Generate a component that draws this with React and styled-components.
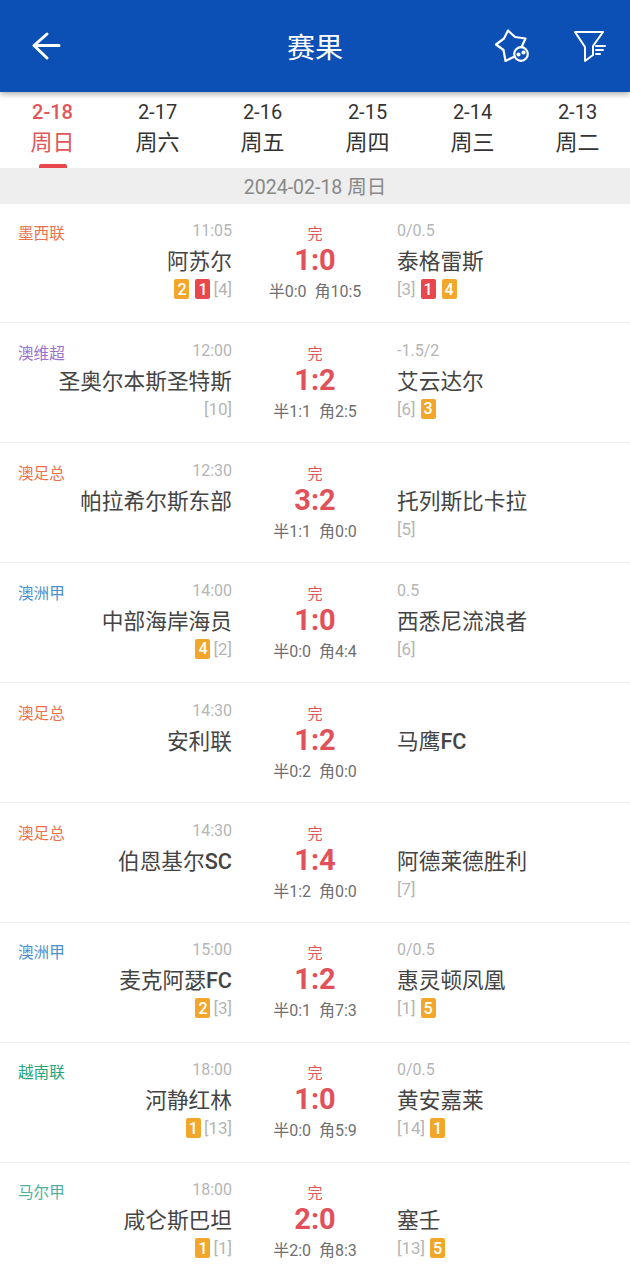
import React from "react";
import styled, { createGlobalStyle } from "styled-components";

const GlobalStyle = createGlobalStyle`
  * {
    box-sizing: border-box;
  }
  html, body {
    margin: 0;
    padding: 0;
    background: #fff;
    font-family: Roboto, "Noto Sans CJK SC", sans-serif;
  }
`;

const Page = styled.div`
  width: 630px;
  height: 1280px;
  overflow: hidden;
`;

const Header = styled.header`
  position: relative;
  z-index: 1;
  height: 92px;
  display: flex;
  align-items: center;
  justify-content: space-between;
  padding: 0 22px 0 30px;
  background: #0d50b5;
  box-shadow: 0 2px 6px rgba(0, 0, 0, 0.35);
`;

const Title = styled.h1`
  position: absolute;
  left: 0;
  right: 0;
  top: 30px;
  margin: 0;
  font-size: 28px;
  line-height: 38px;
  font-weight: 400;
  text-align: center;
  color: #fff;
`;

const Actions = styled.div`
  display: flex;
  align-items: center;
  gap: 42px;
`;

const Icon = styled.svg`
  display: block;
  fill: none;
  stroke: #fff;
  stroke-width: ${(p) => p.$weight || 2};
  stroke-linecap: round;
  stroke-linejoin: round;
`;

const Tabs = styled.nav`
  height: 76px;
  display: grid;
  grid-template-columns: repeat(6, 105px);
`;

const Tab = styled.div`
  position: relative;
  display: flex;
  flex-direction: column;
  align-items: center;
  padding-top: 8px;
  color: ${(p) => (p.$active ? "#e2555a" : "#333")};
`;

const TabDate = styled.span`
  font-size: 20px;
  line-height: 24px;
  font-weight: ${(p) => (p.$active ? 500 : 400)};
`;

const TabDay = styled.span`
  margin-top: 1px;
  font-size: 22px;
  line-height: 36px;
`;

const TabMark = styled.i`
  position: absolute;
  bottom: 0;
  width: 28px;
  height: 4px;
  border-radius: 2px 2px 0 0;
  background: #e8474c;
`;

const DateBar = styled.div`
  height: 35.5px;
  padding-top: 5px;
  background: #eee;
  color: #888;
  font-size: 19.5px;
  line-height: 30px;
  text-align: center;
`;

const Row = styled.div`
  height: 119.9px;
  display: grid;
  grid-template-columns: 233px 164px 1fr;
  border-bottom: 1px solid #eee;
`;

const Home = styled.div`
  display: flex;
  flex-direction: column;
  padding: 17.6px 1px 0 18px;
`;

const TopLine = styled.div`
  height: 20px;
  display: flex;
  justify-content: space-between;
  align-items: flex-start;
`;

const League = styled.span`
  font-size: 15.6px;
  line-height: 26px;
  color: ${(p) => p.$color};
`;

const Time = styled.span`
  font-size: 16px;
  line-height: 20px;
  color: #b5b5b5;
`;

const Team = styled.div`
  margin-top: 3px;
  font-size: 21.7px;
  line-height: 36px;
  color: #444;
  text-align: ${(p) => (p.$away ? "left" : "right")};
`;

const Latin = styled.span`
  font-weight: 500;
`;

const Rank = styled.span`
  font-size: 17px;
  color: #b5b5b5;
`;

const Marks = styled.div`
  height: 22px;
  margin-top: -2px;
  display: flex;
  align-items: center;
  gap: 6px;
  justify-content: ${(p) => (p.$away ? "flex-start" : "flex-end")};

  ${Rank} {
    margin: ${(p) => (p.$away ? "0 -1px 0 0" : "0 0 0 -3px")};
  }
`;

const Card = styled.span`
  width: 15px;
  height: 20px;
  border-radius: 2px;
  display: flex;
  align-items: center;
  justify-content: center;
  font-size: 16px;
  font-weight: 500;
  color: #fff;
  background: ${(p) => (p.$red ? "#e8474c" : "#f2a72a")};
`;

const Middle = styled.div`
  display: flex;
  flex-direction: column;
  align-items: center;
  padding-top: 20.6px;
`;

const Status = styled.span`
  font-size: 15px;
  line-height: 20px;
  color: #e2555a;
`;

const Score = styled.span`
  font-size: 29px;
  line-height: 32px;
  font-weight: 700;
  color: #e2505a;
`;

const Extra = styled.span`
  margin-top: 4px;
  font-size: 16px;
  line-height: 24px;
  color: #6f6f6f;
  white-space: pre;
`;

const Away = styled.div`
  display: flex;
  flex-direction: column;
  padding-top: 17.6px;
`;

const matches = [
  { league: "墨西联", color: "#e8734a", time: "11:05", home: "阿苏尔", homeMarks: [["y", 2], ["r", 1], "[4]"], score: "1:0", half: "半0:0", corner: "角10:5", odds: "0/0.5", away: "泰格雷斯", awayMarks: ["[3]", ["r", 1], ["y", 4]] },
  { league: "澳维超", color: "#9a72cc", time: "12:00", home: "圣奥尔本斯圣特斯", homeMarks: ["[10]"], score: "1:2", half: "半1:1", corner: "角2:5", odds: "-1.5/2", away: "艾云达尔", awayMarks: ["[6]", ["y", 3]] },
  { league: "澳足总", color: "#e8734a", time: "12:30", home: "帕拉希尔斯东部", homeMarks: [], score: "3:2", half: "半1:1", corner: "角0:0", odds: "", away: "托列斯比卡拉", awayMarks: ["[5]"] },
  { league: "澳洲甲", color: "#4a8fd0", time: "14:00", home: "中部海岸海员", homeMarks: [["y", 4], "[2]"], score: "1:0", half: "半0:0", corner: "角4:4", odds: "0.5", away: "西悉尼流浪者", awayMarks: ["[6]"] },
  { league: "澳足总", color: "#e8734a", time: "14:30", home: "安利联", homeMarks: [], score: "1:2", half: "半0:2", corner: "角0:0", odds: "", away: "马鹰FC", awayMarks: [] },
  { league: "澳足总", color: "#e8734a", time: "14:30", home: "伯恩基尔SC", homeMarks: [], score: "1:4", half: "半1:2", corner: "角0:0", odds: "", away: "阿德莱德胜利", awayMarks: ["[7]"] },
  { league: "澳洲甲", color: "#4a8fd0", time: "15:00", home: "麦克阿瑟FC", homeMarks: [["y", 2], "[3]"], score: "1:2", half: "半0:1", corner: "角7:3", odds: "0/0.5", away: "惠灵顿凤凰", awayMarks: ["[1]", ["y", 5]] },
  { league: "越南联", color: "#1fa67a", time: "18:00", home: "河静红林", homeMarks: [["y", 1], "[13]"], score: "1:0", half: "半0:0", corner: "角5:9", odds: "0/0.5", away: "黄安嘉莱", awayMarks: ["[14]", ["y", 1]] },
  { league: "马尔甲", color: "#4fb0a0", time: "18:00", home: "咸仑斯巴坦", homeMarks: [["y", 1], "[1]"], score: "2:0", half: "半2:0", corner: "角8:3", odds: "", away: "塞壬", awayMarks: ["[13]", ["y", 5]] },
];

const days = [
  ["2-18", "周日"],
  ["2-17", "周六"],
  ["2-16", "周五"],
  ["2-15", "周四"],
  ["2-14", "周三"],
  ["2-13", "周二"],
];

const renderMarks = (marks) =>
  marks.map((m, i) =>
    typeof m === "string" ? (
      <Rank key={i}>{m}</Rank>
    ) : (
      <Card key={i} $red={m[0] === "r"}>{m[1]}</Card>
    )
  );

// club suffixes like FC / SC sit a bit heavier than the chinese name
const renderName = (name) => {
  const suffix = name.match(/[A-Z]+$/);
  if (!suffix) return name;
  return (
    <>
      {name.slice(0, suffix.index)}
      <Latin>{suffix[0]}</Latin>
    </>
  );
};

const App = () => (
  <Page>
    <GlobalStyle />
    <Header>
      <Icon width="32" height="32" viewBox="0 0 32 32" $weight={3}>
        <path d="M29 15.500H4M17 4L4 15.500L17 28" />
      </Icon>
      <Title>赛果</Title>
      <Actions>
        <Icon width="36" height="36" viewBox="0 0 36 36" $weight={2.2}>
          <path d="M27.500 19L31.500 10.500L21 9L14 2.500L10 10.500L2 16.500L9.500 22L11.500 33L19.500 29" />
          <circle cx="27" cy="26" r="6.800" />
          <circle cx="24.500" cy="26.500" r="1" fill="#fff" />
          <circle cx="29.500" cy="24.500" r="1" fill="#fff" />
        </Icon>
        <Icon width="36" height="36" viewBox="0 0 36 36">
          <path d="M3 4H31L21 18V27L13 33V19Z" />
          <path d="M24 18h9M24 22h7M24 26h4" />
        </Icon>
      </Actions>
    </Header>
    <Tabs>
      {days.map(([date, day], i) => (
        <Tab key={date} $active={i === 0}>
          <TabDate $active={i === 0}>{date}</TabDate>
          <TabDay>{day}</TabDay>
          {i === 0 && <TabMark />}
        </Tab>
      ))}
    </Tabs>
    <DateBar>2024-02-18 周日</DateBar>
    {matches.map((m, i) => (
      <Row key={i}>
        <Home>
          <TopLine>
            <League $color={m.color}>{m.league}</League>
            <Time>{m.time}</Time>
          </TopLine>
          <Team>{renderName(m.home)}</Team>
          <Marks>{renderMarks(m.homeMarks)}</Marks>
        </Home>
        <Middle>
          <Status>完</Status>
          <Score>{m.score}</Score>
          <Extra>{m.half + "  " + m.corner}</Extra>
        </Middle>
        <Away>
          <TopLine>
            <Time>{m.odds}</Time>
          </TopLine>
          <Team $away>{renderName(m.away)}</Team>
          <Marks $away>{renderMarks(m.awayMarks)}</Marks>
        </Away>
      </Row>
    ))}
  </Page>
);

export default App;
